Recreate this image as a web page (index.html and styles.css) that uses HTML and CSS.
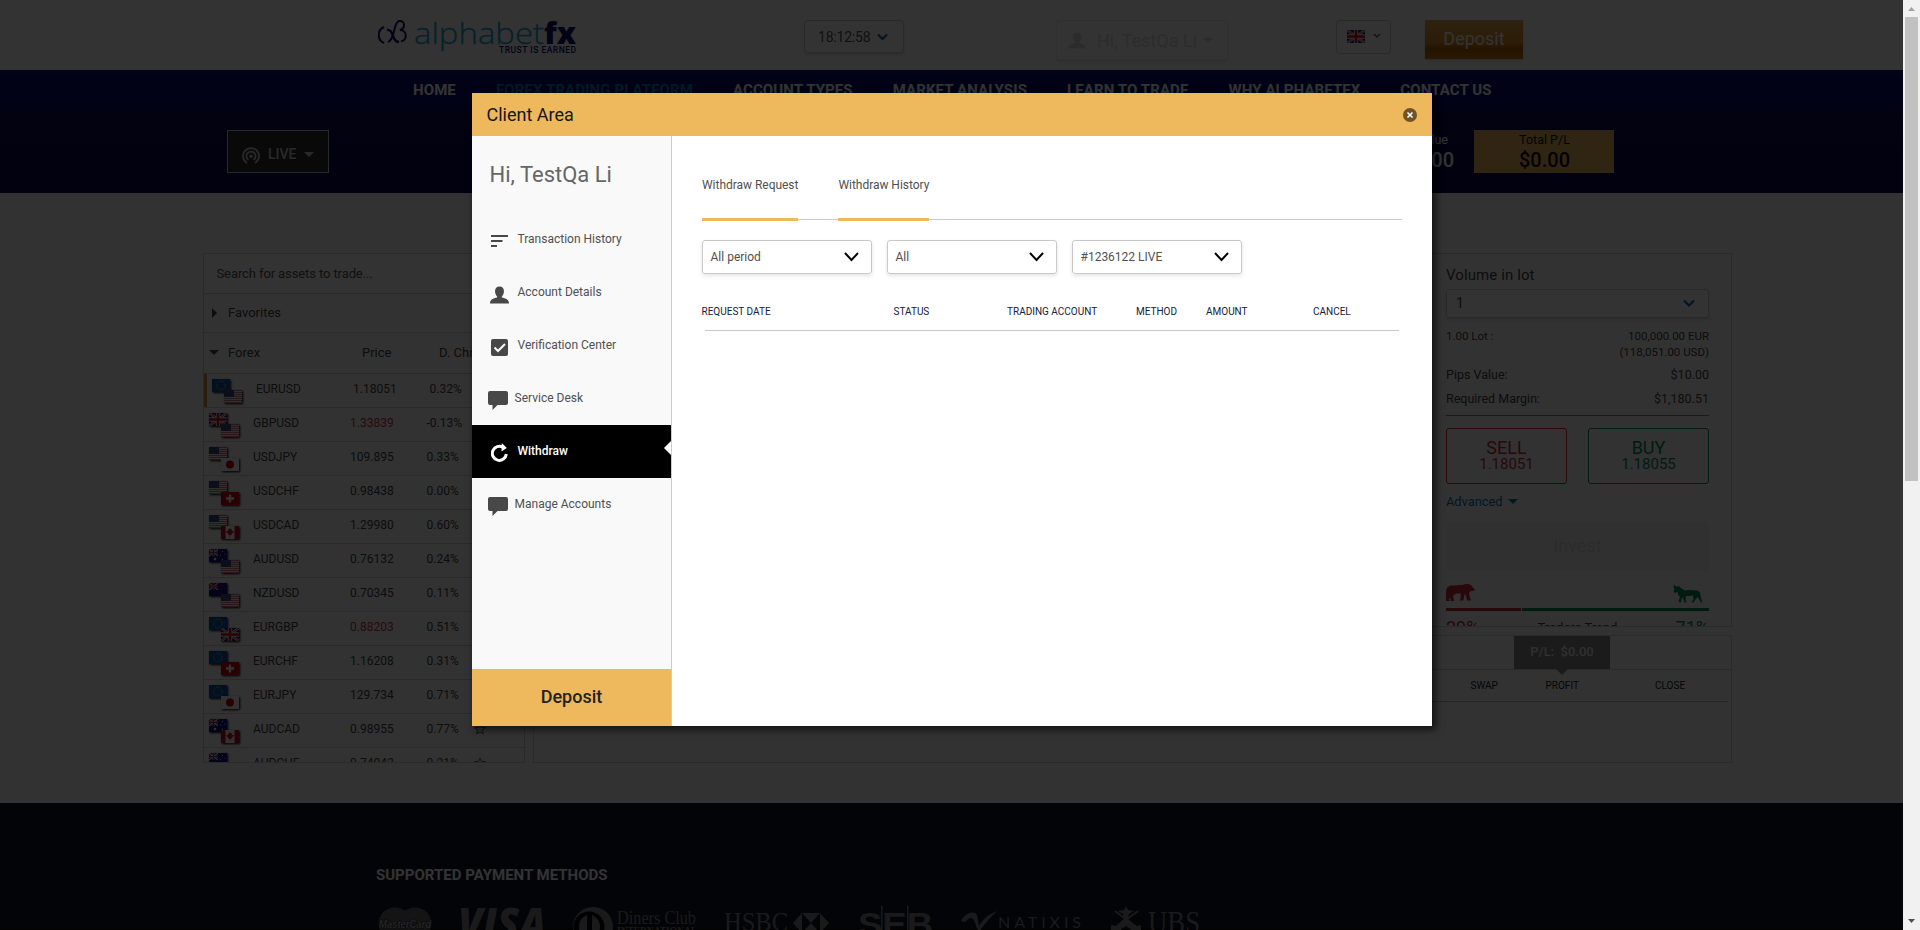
FILE: index.html
```html
<!DOCTYPE html>
<html lang="en">
<head>
<meta charset="utf-8">
<title>Client Area</title>
<link rel="stylesheet" href="styles.css">
</head>
<body>
<svg class="defs" width="0" height="0" aria-hidden="true">
  <symbol id="us" viewBox="0 0 18 13"><rect width="18" height="13" fill="#eee"/><path d="M0 .5h18M0 2.5h18M0 4.5h18M0 6.5h18M0 8.5h18M0 10.5h18M0 12.5h18" stroke="#c4606a" stroke-width=".9"/><rect width="10" height="7" fill="#3c4a7c"/></symbol>
  <symbol id="eu" viewBox="0 0 18 13"><rect width="18" height="13" fill="#0a58a8"/><circle cx="9" cy="6.500" r="4.300" fill="none" stroke="#d8c830" stroke-width="1" stroke-dasharray="1 1.250"/></symbol>
  <symbol id="gb" viewBox="0 0 18 13"><rect width="18" height="13" fill="#14147c"/><path d="M0 0l18 13M18 0L0 13" stroke="#eee" stroke-width="2.600"/><path d="M0 0l18 13M18 0L0 13" stroke="#d01020" stroke-width="1"/><path d="M9 0v13M0 6.500h18" stroke="#eee" stroke-width="4.400"/><path d="M9 0v13M0 6.500h18" stroke="#d01020" stroke-width="2.600"/></symbol>
  <symbol id="jp" viewBox="0 0 18 13"><rect width="18" height="13" fill="#fafafa"/><circle cx="9" cy="6.500" r="4" fill="#c8000c"/></symbol>
  <symbol id="ch" viewBox="0 0 18 13"><rect width="18" height="13" fill="#d0000c"/><path d="M9 2.500v8M5 6.500h8" stroke="#fff" stroke-width="2.400"/></symbol>
  <symbol id="ca" viewBox="0 0 18 13"><rect width="18" height="13" fill="#fafafa"/><path d="M0 0h4.500v13H0zM13.500 0H18v13h-4.500zM9 2l1 1.500 1-.300-.200 2 2-.500-.500 1.500-2 2 .200.800H9.300V11h-.600V9H7.500l.200-.800-2-2-.500-1.500 2 .500-.200-2 1 .300z" fill="#c01030"/></symbol>
  <symbol id="au" viewBox="0 0 18 13"><rect width="18" height="13" fill="#10107c"/><path d="M0 0l9 7M9 0L0 7" stroke="#ddd" stroke-width="1.200"/><path d="M4.500 0v7M0 3.500h9" stroke="#ddd" stroke-width="2.200"/><path d="M4.500 0v7M0 3.500h9" stroke="#d01020" stroke-width="1.200"/><circle cx="6" cy="10" r="1.300" fill="#eee"/><path d="M13 2h1v1h-1zM11 5.500h1v1h-1zM15.500 4.500h1v1h-1zM13 10h1v1h-1z" fill="#eee"/></symbol>
  <symbol id="nz" viewBox="0 0 18 13"><rect width="18" height="13" fill="#10107c"/><path d="M0 0l9 7M9 0L0 7" stroke="#ddd" stroke-width="1.200"/><path d="M4.500 0v7M0 3.500h9" stroke="#d04050" stroke-width="1.800"/><path d="M13 2h1v1h-1zM11 5.500h1v1h-1zM15.500 4.500h1v1h-1zM13 10h1v1h-1z" fill="#e02030"/></symbol>
  <symbol id="star" viewBox="0 0 12 12"><path d="M6 .900l1.500 3.500 3.800.300-2.900 2.500.900 3.700L6 8.900l-3.300 2 .900-3.700L.700 4.700l3.800-.300z" fill="none" stroke="#555" stroke-width="1"/></symbol>
  <symbol id="person" viewBox="0 0 20 18"><path d="M10 0c3 0 4.700 2 4.700 5 0 2.300-1 4.300-2.200 5.500v1.200c4 .800 7.500 2.300 7.500 6.300H0c0-4 3.500-5.500 7.500-6.300v-1.200C6.300 9.300 5.300 7.300 5.300 5c0-3 1.700-5 4.700-5z"/></symbol>
  <symbol id="bubble" viewBox="0 0 20 19"><path d="M2 0h16a2 2 0 0 1 2 2v10a2 2 0 0 1-2 2H9.500L4.500 19v-5H2a2 2 0 0 1-2-2V2a2 2 0 0 1 2-2z"/></symbol>
</svg>

<div class="page">
  <header class="top">
    <svg class="logo" width="200" height="44" viewBox="0 -4 200 44">
      <g fill="none" stroke="#10106c" stroke-width="2"><path d="M6 9C-1 12-1 22 6 25"/><path d="M9 12c4-1 5 3 6 6s3 6 6 6" stroke-width="2.400"/><path d="M10 24c7-2 5-19 11-21 6-1 7 7 1 9 8 0 7 12 1 11"/></g>
      <text x="36" y="25.500" font-family="'Open Sans'" font-weight="300" font-size="30" fill="#1ca4d4" stroke="#1ca4d4" stroke-width=".3" textLength="130" lengthAdjust="spacingAndGlyphs">alphabet</text>
      <text x="166" y="25.500" font-family="'Open Sans'" font-weight="800" font-size="30" fill="#10106c" textLength="32" lengthAdjust="spacingAndGlyphs">fx</text>
      <text x="121" y="35" font-family="Roboto" font-weight="500" font-size="8.500" fill="#10106c" textLength="77">TRUST IS EARNED</text>
    </svg>
    <div class="clock">18:12:58<svg width="11" height="8" viewBox="0 0 11 8"><path d="M1 1.500l4.500 4.500L10 1.500" fill="none" stroke="#0a64b4" stroke-width="2.200"/></svg></div>
    <div class="user"><svg width="18" height="17"><use href="#person"/></svg><span>Hi, TestQa Li</span><i class="tri-d"></i></div>
    <div class="lang"><svg width="18" height="13"><use href="#gb"/></svg><svg width="8" height="6" viewBox="0 0 8 6"><path d="M1 1l3 3 3-3" fill="none" stroke="#555" stroke-width="1.300"/></svg></div>
    <div class="top-deposit">Deposit</div>
  </header>

  <div class="band">
    <nav class="nav"><a>HOME</a><a class="on">FOREX TRADING PLATFORM</a><a>ACCOUNT TYPES</a><a>MARKET ANALYSIS</a><a>LEARN TO TRADE</a><a>WHY ALPHABETFX</a><a>CONTACT US</a></nav>
    <div class="status">
      <div class="live"><svg width="18" height="17" viewBox="0 0 18 17" fill="none" stroke="#ccc" stroke-width="1.800"><path d="M5 16a8 8 0 1 1 8 0"/><path d="M6.500 13a4.600 4.600 0 1 1 5 0"/><circle cx="9" cy="9.300" r="1.500" fill="#ccc" stroke-width=".5"/></svg><span>LIVE</span><i class="tri-d"></i></div>
      <div class="value"><small>Value</small><b>$0.00</b></div>
      <div class="total"><small>Total P/L</small><b>$0.00</b></div>
    </div>
  </div>

  <main class="work">
    <section class="assets">
      <div class="search">Search for assets to trade...</div>
      <div class="group"><i class="tri-r"></i><span>Favorites</span></div>
      <div class="group forex"><i class="tri-d"></i><span class="g1">Forex</span><span class="g2">Price</span><span>D. Chng</span></div>
      <div class="row sel"><span class="fl"><svg><use href="#eu"/></svg><svg><use href="#us"/></svg></span><span class="nm">EURUSD</span><span class="pr">1.18051</span><span class="ch">0.32%</span><svg class="st"><use href="#star"/></svg></div>
      <div class="row"><span class="fl"><svg><use href="#gb"/></svg><svg><use href="#us"/></svg></span><span class="nm">GBPUSD</span><span class="pr red">1.33839</span><span class="ch">-0.13%</span><svg class="st"><use href="#star"/></svg></div>
      <div class="row"><span class="fl"><svg><use href="#us"/></svg><svg><use href="#jp"/></svg></span><span class="nm">USDJPY</span><span class="pr">109.895</span><span class="ch">0.33%</span><svg class="st"><use href="#star"/></svg></div>
      <div class="row"><span class="fl"><svg><use href="#us"/></svg><svg><use href="#ch"/></svg></span><span class="nm">USDCHF</span><span class="pr">0.98438</span><span class="ch">0.00%</span><svg class="st"><use href="#star"/></svg></div>
      <div class="row"><span class="fl"><svg><use href="#us"/></svg><svg><use href="#ca"/></svg></span><span class="nm">USDCAD</span><span class="pr">1.29980</span><span class="ch">0.60%</span><svg class="st"><use href="#star"/></svg></div>
      <div class="row"><span class="fl"><svg><use href="#au"/></svg><svg><use href="#us"/></svg></span><span class="nm">AUDUSD</span><span class="pr">0.76132</span><span class="ch">0.24%</span><svg class="st"><use href="#star"/></svg></div>
      <div class="row"><span class="fl"><svg><use href="#nz"/></svg><svg><use href="#us"/></svg></span><span class="nm">NZDUSD</span><span class="pr">0.70345</span><span class="ch">0.11%</span><svg class="st"><use href="#star"/></svg></div>
      <div class="row"><span class="fl"><svg><use href="#eu"/></svg><svg><use href="#gb"/></svg></span><span class="nm">EURGBP</span><span class="pr red">0.88203</span><span class="ch">0.51%</span><svg class="st"><use href="#star"/></svg></div>
      <div class="row"><span class="fl"><svg><use href="#eu"/></svg><svg><use href="#ch"/></svg></span><span class="nm">EURCHF</span><span class="pr">1.16208</span><span class="ch">0.31%</span><svg class="st"><use href="#star"/></svg></div>
      <div class="row"><span class="fl"><svg><use href="#eu"/></svg><svg><use href="#jp"/></svg></span><span class="nm">EURJPY</span><span class="pr">129.734</span><span class="ch">0.71%</span><svg class="st"><use href="#star"/></svg></div>
      <div class="row"><span class="fl"><svg><use href="#au"/></svg><svg><use href="#ca"/></svg></span><span class="nm">AUDCAD</span><span class="pr">0.98955</span><span class="ch">0.77%</span><svg class="st"><use href="#star"/></svg></div>
      <div class="row"><span class="fl"><svg><use href="#au"/></svg><svg><use href="#ch"/></svg></span><span class="nm">AUDCHF</span><span class="pr">0.74942</span><span class="ch">0.21%</span><svg class="st"><use href="#star"/></svg></div>
    </section>

    <div class="right">
      <section class="trade">
        <div class="ticket">
          <div class="vol">Volume in lot</div>
          <div class="lots"><span>1</span><svg width="12" height="9" viewBox="0 0 12 9"><path d="M1 1.500l5 5 5-5" fill="none" stroke="#0a64b4" stroke-width="2.200"/></svg></div>
          <div class="kv sm"><span>1.00 Lot :</span><span>100,000.00 EUR<br>(118,051.00 USD)</span></div>
          <div class="kv">Pips Value:<span>$10.00</span></div>
          <div class="kv">Required Margin:<span>$1,180.51</span></div>
          <div class="sides"><div class="side sell"><b>SELL</b><span>1.18051</span></div><div class="side buy"><b>BUY</b><span>1.18055</span></div></div>
          <div class="adv">Advanced<i class="tri-d"></i></div>
          <div class="invest">Invest</div>
          <div class="animals">
            <svg width="29" height="18" viewBox="0 0 29 18" fill="#c82838"><path d="M0 17V8c0-5 3-7 7-6.500 3 .400 5-.500 8-.500 2 0 3-1 5-.700 1-1 2-.500 3-.100 2 .300 3 2 4 3.500l2 1.800c0 1-2 1.500-4 1.500l-2 2 .500 3 1.500 4.500h-4l-1-5-1.500-1.500-1 6.500h-4l1-2 .300-5H11l-2.500 1L7 12l1 4v1H5l-1-3.500L3 15l1 2z"/></svg>
            <svg width="30" height="19" viewBox="0 0 30 19" fill="#008c58"><path d="M2 0c0 2 1 2.800 2.500 2.500C6 2 7 3 8 4l4 2.500c4-.800 8-.500 12 0 3 .500 3.500 3 3.500 5l.800 3 1.200 4H28l-2-3.500-1.500-2-2 2.500-2 3h-1.800l1.800-3.500-.500-3.500c-3 .500-5 .500-7 .500l-.500 2.500 1 4h-2l-1.500-5-1.500 1.500-.500 3.500H6.500l-1-1.500 1.500-4-2-2.500-.500-3L2.500 9 .500 8 1.500 5 .500 3z"/></svg>
          </div>
          <div class="bar"><i></i><i></i></div>
          <div class="trend"><b>29%</b><span>Traders Trend</span><em>71%</em></div>
        </div>
      </section>
      <section class="positions">
        <div class="tabs2"><div class="pl">P/L:&nbsp; $0.00</div></div>
        <div class="phead"><span>SWAP</span><span>PROFIT</span><span>CLOSE</span></div>
      </section>
    </div>
  </main>

  <footer class="foot">
    <h3>SUPPORTED PAYMENT METHODS</h3>
    <svg class="pays" width="840" height="24" viewBox="0 0 840 24" fill="#808084">
      <g fill="#66666a"><circle cx="17" cy="18" r="16.500"/><circle cx="37" cy="18" r="16.500"/></g>
      <text x="1" y="21.500" font-family="'Liberation Sans'" font-weight="700" font-style="italic" font-size="11" fill="#b4b4b8" stroke="#101018" stroke-width="1" paint-order="stroke" textLength="52" lengthAdjust="spacingAndGlyphs">MasterCard</text>
      <text x="80" y="34" font-family="'Open Sans'" font-weight="800" font-style="italic" font-size="44" textLength="88" lengthAdjust="spacingAndGlyphs">VISA</text>
      <circle cx="215" cy="21" r="20"/><circle cx="211" cy="21" r="15.500" fill="#06080f"/><path d="M209 9a13 13 0 0 0 0 24zM214 9a13 13 0 0 1 0 24z"/>
      <text x="239" y="18" font-family="'Liberation Serif'" font-size="18" textLength="79" lengthAdjust="spacingAndGlyphs">Diners Club</text>
      <text x="239" y="28" font-family="'Liberation Serif'" font-weight="700" font-size="10" textLength="80" lengthAdjust="spacingAndGlyphs">INTERNATIONAL</text>
      <text x="346" y="25" font-family="'Liberation Serif'" font-size="28" textLength="64" lengthAdjust="spacingAndGlyphs">HSBC</text>
      <path d="M415 17l9-10v20zM424 7h18l-9 10zM424 27l9-10 9 10zM442 7l9 10-9 10z"/>
      <text x="480" y="30" font-family="'Liberation Sans'" font-weight="700" font-size="34" textLength="75" lengthAdjust="spacingAndGlyphs">SEB</text><path d="M503 0h1.500v24H503zM529 0h1.500v24H529z"/>
      <path d="M583 15c4-8 13-11 16-6l2 11c4-7 10-12 18-15-9 9-14 15-18 21-4-6-4-15-9-14-3 1-4 6-9 3z"/>
      <text x="620" y="22" font-family="Lato" font-size="16" textLength="83">NATIXIS</text>
      <path d="M748 0l2 4 6 1-5 3-1 5 8 7 5-1v6h-8l-7-5-7 5h-8v-6l5 1 8-7-1-5-5-3 6-1z"/><path d="M737 5l24 18M760 5l-24 18" stroke="#808084" stroke-width="2"/>
      <text x="770" y="27" font-family="'Liberation Serif'" font-size="32" textLength="52" lengthAdjust="spacingAndGlyphs">UBS</text>
    </svg>
  </footer>

  <div class="shade"></div>

  <div class="modal">
    <div class="mhead"><span>Client Area</span><svg width="14" height="14" viewBox="0 0 14 14"><circle cx="7" cy="7" r="7" fill="#705428"/><path d="M4.500 4.500l5 5M9.500 4.500l-5 5" stroke="#fff" stroke-width="1.600"/></svg></div>
    <div class="mbody">
      <aside class="side-menu">
        <div class="hello">Hi, TestQa Li</div>
        <div class="mi"><svg width="17" height="12" viewBox="0 0 17 12"><path d="M0 1h17M0 6h11.500M0 11h6" stroke="#484848" stroke-width="1.800"/></svg>Transaction History</div>
        <div class="mi person"><svg width="19" height="18"><use href="#person"/></svg>Account Details</div>
        <div class="mi check"><svg width="17" height="17" viewBox="0 0 17 17"><rect width="17" height="17" rx="2"/><path d="M3.500 8.500l3.500 3.500 7-7" fill="none" stroke="#f9f9f9" stroke-width="2"/></svg>Verification Center</div>
        <div class="mi chat"><svg width="20" height="19"><use href="#bubble"/></svg>Service Desk</div>
        <div class="mi on"><svg width="18" height="19" viewBox="0 0 18 19"><path d="M12 4.400A7 7 0 1 0 15.300 11" fill="none" stroke="#fff" stroke-width="3"/><path d="M10.800 0l5 5-5.300 3.500z" fill="#fff"/></svg>Withdraw</div>
        <div class="mi chat"><svg width="20" height="19"><use href="#bubble"/></svg>Manage Accounts</div>
        <div class="mdep">Deposit</div>
      </aside>
      <div class="pane">
        <div class="tabs"><span>Withdraw Request</span><span>Withdraw History</span></div>
        <div class="filters">
          <div class="dd">All period<svg width="15" height="10" viewBox="0 0 15 10"><path d="M1 1l6.500 7L14 1" fill="none" stroke="#000" stroke-width="2"/></svg></div>
          <div class="dd">All<svg width="15" height="10" viewBox="0 0 15 10"><path d="M1 1l6.500 7L14 1" fill="none" stroke="#000" stroke-width="2"/></svg></div>
          <div class="dd">#1236122 LIVE<svg width="15" height="10" viewBox="0 0 15 10"><path d="M1 1l6.500 7L14 1" fill="none" stroke="#000" stroke-width="2"/></svg></div>
        </div>
        <div class="thead"><span>REQUEST DATE</span><span>STATUS</span><span>TRADING ACCOUNT</span><span>METHOD</span><span>AMOUNT</span><span>CANCEL</span></div>
        <div class="rule"></div>
      </div>
    </div>
  </div>
</div>
<div class="scroll"><i class="up"></i><div class="thumb"></div><i class="down"></i></div>
</body>
</html>
```
FILE: styles.css
```css
* { box-sizing: border-box; }
body { margin: 0; display: flex; width: 1920px; height: 930px; overflow: hidden; font-family: Roboto, "Liberation Sans", sans-serif; font-size: 12px; color: #444; }
svg { display: block; flex: none; }
.defs { position: absolute; }
i { display: block; flex: none; }
.page { position: relative; width: 1903px; height: 930px; overflow: hidden; background: #f7f7f7; }
.tri-d { width: 0; height: 0; border: 5px solid transparent; border-top-color: currentColor; border-bottom: 0; }
.tri-r { width: 0; height: 0; border: 5px solid transparent; border-left-color: currentColor; border-right: 0; }

/* top bar */
.top { display: flex; align-items: flex-start; height: 70px; padding: 14px 0 0 378px; background: #fff; }
.top > div { margin-top: 6px; }
.clock { display: flex; align-items: center; gap: 7px; width: 100px; height: 33px; margin-left: 226px; padding-left: 13px; border: 1px solid #ccc; border-radius: 4px; box-shadow: 0 2px 3px #ddd; font-size: 14px; letter-spacing: -.2px; color: #555; }
.user { display: flex; align-items: center; gap: 11px; width: 172px; height: 40px; margin-left: 152px; padding-left: 11px; border: 1px solid #eaeaea; border-radius: 2px; box-shadow: 0 2px 3px #e8e8e8; font-size: 18px; color: #dcdcdc; fill: #dcdcdc; }
.user .tri-d { margin-left: -5px; }
.user span { width: 100px; white-space: nowrap; }
.lang { display: flex; align-items: center; gap: 8px; width: 55px; height: 34px; margin-left: 108px; padding: 0 0 2px 10px; border: 1px solid #ccc; border-radius: 4px; }
.top-deposit { width: 98px; height: 39px; margin-left: 34px; background: linear-gradient(#e2a850, #dc8c28 55%, #b06404 75%, #d07c14); box-shadow: 0 2px 3px #ddd; color: #fff; font-size: 18px; line-height: 38px; text-align: center; }

/* blue band */
.band { height: 123px; background: linear-gradient(#0e0e78, #0c0c70 38px, #0a0a50 42px, #080850); }
.nav { display: flex; gap: 40px; height: 60px; padding: 13px 0 0 413px; font-size: 15px; font-weight: 700; line-height: 15px; letter-spacing: .1px; color: #fff; white-space: nowrap; }
.nav .on { color: #0a80b0; }
.status { display: flex; padding-left: 227px; color: #fff; }
.live { display: flex; align-items: center; width: 102px; height: 43px; padding-left: 14px; border: 1px solid #ccc; background: #303030; color: #ccc; font-size: 14px; font-weight: 500; }
.live svg { margin-top: 8px; }
.live span { width: 36px; margin: 5px 0 0 8px; }
.live .tri-d { margin-top: 6px; }
.value, .total { display: flex; flex-direction: column; height: 43px; padding-top: 2px; }
.value { width: 125px; margin-left: 1000px; align-items: flex-end; }
.total { width: 140px; margin-left: 20px; padding-left: 1px; align-items: center; background: #eeb85d; color: #111; }
small { font-size: 12.5px; line-height: 16px; }
.value small { padding-right: 6px; }
.status b { font-size: 20px; font-weight: 500; line-height: 25px; }

/* trading area */
.work { display: flex; gap: 8px; height: 610px; padding: 60px 171px 0 203px; }
.assets { width: 322px; height: 510px; overflow: hidden; border: 1px solid #d0d0d0; background: #fafafa; }
.search { height: 39px; padding-left: 12.500px; font-size: 13px; line-height: 39px; letter-spacing: -.1px; color: #555; background: #fff; }
.group { display: flex; align-items: center; height: 39px; padding: 0 0 1px 8px; border-top: 1px solid #d0d0d0; font-size: 13px; }
.group .tri-r { margin-right: 11px; }
.forex { height: 41px; padding-left: 5px; }
.forex .tri-d { margin-right: 9px; }
.g1 { width: 134px; }
.g2 { width: 77px; }
.row { display: flex; align-items: center; height: 34px; padding: 0 0 3px 5px; border-top: 1px solid #d0d0d0; }
.sel { border-left: 3px solid #d89030; }
.fl { display: grid; grid-template: 11px 16px / 12px 32px; padding-top: 6px; height: 33px; }
.fl svg { width: 18px; height: 13px; filter: drop-shadow(1px 1px 1px #000); }
.fl svg + svg { grid-area: 2 / 2; }
.nm { width: 97px; }
.pr { width: 76.500px; }
.ch { width: 47px; }
.red { color: #d83040; }
.st { width: 12px; height: 12px; }
.right { display: flex; flex-direction: column; gap: 8px; width: 1199px; }
.trade { display: flex; justify-content: flex-end; height: 374px; padding: 11px 22px 0 0; overflow: hidden; border: 1px solid #d0d0d0; background: #fafafa; }
.ticket { width: 263px; }
.vol { font-size: 15px; line-height: 20px; letter-spacing: .1px; }
.lots { display: flex; align-items: center; justify-content: space-between; height: 29px; margin-top: 4px; padding: 0 13px 2px 9px; border: 1px solid #ccc; border-radius: 3px; background: #fff; box-shadow: 0 2px 3px #ddd; font-size: 14px; }
.lots svg { margin-top: 2px; }
.kv { display: flex; justify-content: space-between; font-size: 12.500px; line-height: 24px; }
.kv.sm { margin: 10px 0 3px; font-size: 11.500px; line-height: 16px; text-align: right; }
.sides { display: flex; justify-content: space-between; margin-top: 4px; padding-top: 12px; border-top: 1px solid #888; }
.side { display: flex; flex-direction: column; align-items: center; width: 121px; height: 56px; padding-top: 9px; border: 1px solid; border-radius: 3px; font-size: 15px; line-height: 15px; }
.side b { font-size: 18px; font-weight: 400; line-height: 19px; }
.sell { color: #c82838; }
.buy { color: #008c58; }
.adv { display: flex; align-items: center; gap: 6px; height: 37px; padding-bottom: 3px; color: #0a70b4; font-size: 12.800px; }
.invest { height: 50px; border-radius: 3px; background: #f0f0f0; color: #d8d8d8; font-size: 18px; line-height: 50px; text-align: center; }
.animals { display: flex; justify-content: space-between; height: 37px; padding: 13px 6px 0 0; }
.bar { display: flex; gap: 1px; height: 3px; }
.bar i { width: 75px; background: #c82838; }
.bar i + i { flex: 1; background: #008c58; }
.trend { display: flex; justify-content: space-between; padding-top: 7px; font-size: 13px; line-height: 20px; }
.trend b, .trend em { font: 400 18px/20px Roboto, sans-serif; color: #c82838; }
.trend em { color: #008c58; }
.positions { height: 128px; border: 1px solid #d0d0d0; background: #fafafa; }
.tabs2 { display: flex; justify-content: flex-end; height: 34px; padding-right: 121px; border-bottom: 1px solid #d0d0d0; }
.pl { position: relative; width: 96px; height: 33px; background: #858585; color: #eee; font-size: 13px; font-weight: 500; line-height: 31px; text-align: center; }
.pl::after { content: ""; position: absolute; top: 33px; left: 42px; border: 6px solid transparent; border-top-color: #858585; border-bottom: 0; }
.phead { display: grid; grid-template-columns: 75px 109.500px 73px; justify-content: end; height: 32px; margin-right: 3px; border-bottom: 1px solid #bbb; font-size: 10px; line-height: 32px; color: #222; }

/* footer */
.foot { height: 127px; padding: 65px 0 0 376px; background: #0f142c; border-bottom: 1px solid #000; }
.foot h3 { margin: 0 0 24px; font-size: 15px; font-weight: 700; line-height: 14px; color: #fff; }
.pays { margin-left: 2px; }

/* dimming layer and dialog */
.shade { position: absolute; inset: 0; background: rgba(0, 0, 0, .8); }
.modal { position: absolute; top: 93px; left: 472px; width: 960px; height: 633px; background: #fff; box-shadow: 3px 3px 7px 1px rgba(0, 0, 0, .6); }
.mhead { display: flex; align-items: center; justify-content: space-between; height: 43px; padding: 0 15px 0 14.500px; background: #eeb85d; color: #151515; font-size: 18px; }
.mbody { display: flex; height: 590px; }
.side-menu { display: flex; flex-direction: column; width: 200px; border-right: 1px solid #ccc; background: #f9f9f9; }
.hello { height: 77px; padding: 25px 0 0 17.500px; font-size: 22px; line-height: 28px; color: #666; }
.mi { display: flex; align-items: flex-start; gap: 9.500px; height: 53px; padding: 18px 0 0 19px; font-size: 12px; line-height: 17px; color: #505050; fill: #484848; }
.mi svg { margin-top: 4px; }
.mi.person { padding-left: 18px; gap: 8.500px; }
.mi.person svg { margin-top: 2px; }
.mi.check svg { margin-top: 2px; }
.mi.chat { padding-left: 16px; gap: 6.500px; }
.mi.chat svg { margin-top: 1px; }
.mi.on { position: relative; gap: 8.500px; background: #000; color: #fff; font-weight: 500; }
.mi.on svg { margin-top: 0; }
.mi.on::after { content: ""; position: absolute; top: 16px; right: 0; border: 7px solid transparent; border-right-color: #fff; border-left: 0; }
.mdep { height: 57px; margin-top: auto; background: #eeb85d; color: #222; font-size: 18px; font-weight: 500; line-height: 56px; text-align: center; }
.pane { flex: 1; padding: 40px 30px 0 29px; }
.tabs { display: flex; gap: 40px; height: 44px; margin: 0 0 20px 1px; padding-top: 1px; border-bottom: 1px solid #ccc; font-size: 12px; line-height: 17px; letter-spacing: -.03px; color: #505050; }
.tabs span { height: 44px; border-bottom: 3px solid #eeb85d; }
.filters { display: flex; gap: 15px; padding-left: 1px; }
.dd { display: flex; align-items: center; justify-content: space-between; width: 170px; height: 34px; padding: 0 12px 0 7.500px; border: 1px solid #c8c8c8; border-radius: 3px; box-shadow: 0 2px 4px #e4e4e4; font-size: 12px; color: #505050; }
.thead { display: grid; grid-template-columns: 192px 113.500px 129px 70px 107px 1fr; height: 56px; padding-left: .5px; font-size: 10px; line-height: 76px; color: #16203a; white-space: nowrap; }
.rule { margin: 0 3px 0 4px; border-bottom: 1px solid #c8c8c8; }

/* scrollbar */
.scroll { display: flex; flex-direction: column; width: 17px; height: 930px; padding: 0 2px; background: #f1f1f1; }
.scroll i { width: 7px; height: 4px; margin: 7px 3px 6px; background: #a3a3a3; clip-path: polygon(50% 0, 100% 100%, 0 100%); }
.thumb { height: 464px; background: #c1c1c1; }
.scroll .down { margin: auto 3px 7px; background: #505050; clip-path: polygon(0 0, 100% 0, 50% 100%); }
```
